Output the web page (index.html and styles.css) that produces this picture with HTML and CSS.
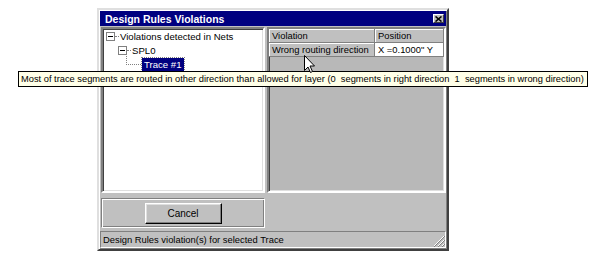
FILE: index.html
```html
<!DOCTYPE html>
<html>
<head>
<meta charset="utf-8">
<link rel="stylesheet" href="styles.css">
</head>
<body>
<div class="stage">
  <div class="window">
    <div class="titlebar">
      <span class="title">Design Rules Violations</span>
      <span class="close"><svg width="7" height="6" viewBox="0 0 7 6"><path d="M0.5 0.5L6.5 5.5M6.5 0.5L0.5 5.5" stroke="#000" stroke-width="1.6"/></svg></span>
    </div>
    <div class="main">
      <div class="leftcol">
        <div class="tree">
          <div class="node n1"><span class="box"><i></i></span><span class="dash"></span>Violations detected in Nets</div>
          <div class="node n2"><span class="box"><i></i></span><span class="dash"></span>SPL0</div>
          <div class="node n3"><span class="elbow"></span><span class="sel">Trace #1</span></div>
        </div>
        <div class="btnpanel">
          <button class="btn">Cancel</button>
        </div>
      </div>
      <div class="rightcol">
        <div class="grid">
          <div class="grow">
            <div class="cell fixed c1">Violation</div>
            <div class="cell fixed c2">Position</div>
          </div>
          <div class="grow">
            <div class="cell fixed c1">Wrong routing direction</div>
            <div class="cell data c2">X =0.1000" Y</div>
          </div>
        </div>
      </div>
    </div>
    <div class="status">
      <span>Design Rules violation(s) for selected Trace</span>
      <svg class="grip" width="12" height="12" viewBox="0 0 12 12">
        <path d="M11 1L1 11M11 5L5 11M11 9L9 11" stroke="#fff" stroke-width="1"/>
        <path d="M12 1L1 12M12 5L5 12M12 9L9 12" stroke="#808080" stroke-width="1"/>
      </svg>
    </div>
  </div>
  <div class="tooltip">Most of trace segments are routed in other direction than allowed for layer (0&nbsp; segments in right direction&nbsp; 1&nbsp; segments in wrong direction)</div>
  <svg class="cursor" width="12" height="19" viewBox="0 0 12 19">
    <path d="M0.5 0.5V15.5L4 12L6.5 17.5L8.5 16.5L6 11H10.5Z" fill="#fff" stroke="#000" stroke-width="1"/>
  </svg>
</div>
</body>
</html>
```
FILE: styles.css
```css
html, body {
  margin: 0;
  padding: 0;
  background: #fff;
}
body {
  font-family: "Liberation Sans", Arial, sans-serif;
  font-size: 10px;
  color: #000;
}
.stage {
  position: relative;
  width: 602px;
  height: 254px;
  overflow: hidden;
}
.window {
  position: absolute;
  left: 97px;
  top: 8px;
  width: 346px;
  height: 237px;
  background: #c0c0c0;
  border: 2px solid;
  border-color: #dfdfdf #404040 #404040 #dfdfdf;
  box-shadow: inset 1px 1px 0 #fff, inset -1px -1px 0 #808080;
  padding: 1px;
  display: flex;
  flex-direction: column;
}
.titlebar {
  height: 15px;
  flex: none;
  background: #000080;
  color: #fff;
  display: flex;
  align-items: center;
  justify-content: space-between;
  padding: 0 2px 0 5px;
}
.title {
  font-weight: bold;
  font-size: 10.5px;
}
.close {
  width: 11px;
  height: 9px;
  background: #c0c0c0;
  border: 1px solid;
  border-color: #fff #404040 #404040 #fff;
  display: flex;
  align-items: center;
  justify-content: center;
  box-sizing: border-box;
}
.main {
  display: flex;
  gap: 2px;
  margin-top: 1px;
  padding-left: 1px;
  height: 201px;
  flex: none;
}
.leftcol {
  width: 167px;
  display: flex;
  flex-direction: column;
  gap: 5px;
}
.tree {
  height: 166px;
  box-sizing: border-box;
  background: #fff;
  border: 2px solid;
  border-color: #808080 #fff #fff #808080;
  box-shadow: inset 1px 1px 0 #404040, inset -1px -1px 0 #dfdfdf;
  font-size: 9.6px;
}
.node {
  height: 14px;
  display: flex;
  align-items: center;
  white-space: nowrap;
}
.n1 { padding-left: 3px; }
.n2 { padding-left: 15px; }
.n3 { padding-left: 23px; }
.box {
  width: 7px;
  height: 7px;
  border: 1px solid #808080;
  display: inline-flex;
  align-items: center;
  justify-content: center;
  box-sizing: content-box;
  background: #fff;
}
.box i {
  width: 5px;
  height: 1px;
  background: #000;
}
.dash {
  width: 4px;
  border-top: 1px dotted #808080;
  margin-right: 1px;
}
.elbow {
  width: 14px;
  height: 10px;
  border-left: 1px dotted #808080;
  border-bottom: 1px dotted #808080;
  margin-top: -10px;
  margin-right: 1px;
}
.sel {
  background: #000080;
  color: #fff;
  padding: 1px 2px;
  outline: 1px dotted #808080;
}
.btnpanel {
  flex: 1;
  border: 1px solid;
  border-color: #808080 #fff #fff #808080;
  box-shadow: inset 1px 1px 0 #fff, inset -1px -1px 0 #808080;
  display: flex;
  align-items: center;
  justify-content: center;
}
.btn {
  width: 77px;
  height: 21px;
  background: #c0c0c0;
  font-family: "Liberation Sans", Arial, sans-serif;
  font-size: 10px;
  color: #000;
  border: 1px solid;
  border-color: #fff #000 #000 #fff;
  box-shadow: inset -1px -1px 0 #808080, inset 1px 1px 0 #dfdfdf;
  padding: 0;
}
.rightcol {
  flex: 1;
  display: flex;
  flex-direction: column;
}
.grid {
  height: 166px;
  box-sizing: border-box;
  background: #b8b8b8;
  border: 2px solid;
  border-color: #808080 #fff #fff #808080;
  box-shadow: inset 1px 1px 0 #404040, inset -1px -1px 0 #dfdfdf;
  font-size: 9.4px;
  overflow: hidden;
}
.grow {
  display: flex;
}
.cell {
  height: 13px;
  line-height: 13px;
  padding: 0 3px;
  white-space: nowrap;
  overflow: hidden;
  border-right: 1px solid #808080;
  border-bottom: 1px solid #808080;
  flex: none;
}
.c1 { width: 99px; }
.c2 { width: 62px; }
.fixed {
  background: #c0c0c0;
  box-shadow: inset 1px 1px 0 #fff;
}
.data {
  background: #fff;
}
.status {
  margin-top: 3px;
  flex: 1;
  border: 1px solid;
  border-color: #808080 #fff #fff #808080;
  display: flex;
  align-items: center;
  justify-content: space-between;
  padding-left: 2px;
  font-size: 9.4px;
}
.grip {
  align-self: flex-end;
}
.tooltip {
  position: absolute;
  left: 18px;
  top: 71px;
  width: 566px;
  height: 14px;
  line-height: 14px;
  background: #ffffe8;
  border: 1px solid #000;
  padding-left: 2px;
  font-size: 9.3px;
  white-space: nowrap;
  overflow: hidden;
}
.cursor {
  position: absolute;
  left: 304px;
  top: 55px;
}
```
